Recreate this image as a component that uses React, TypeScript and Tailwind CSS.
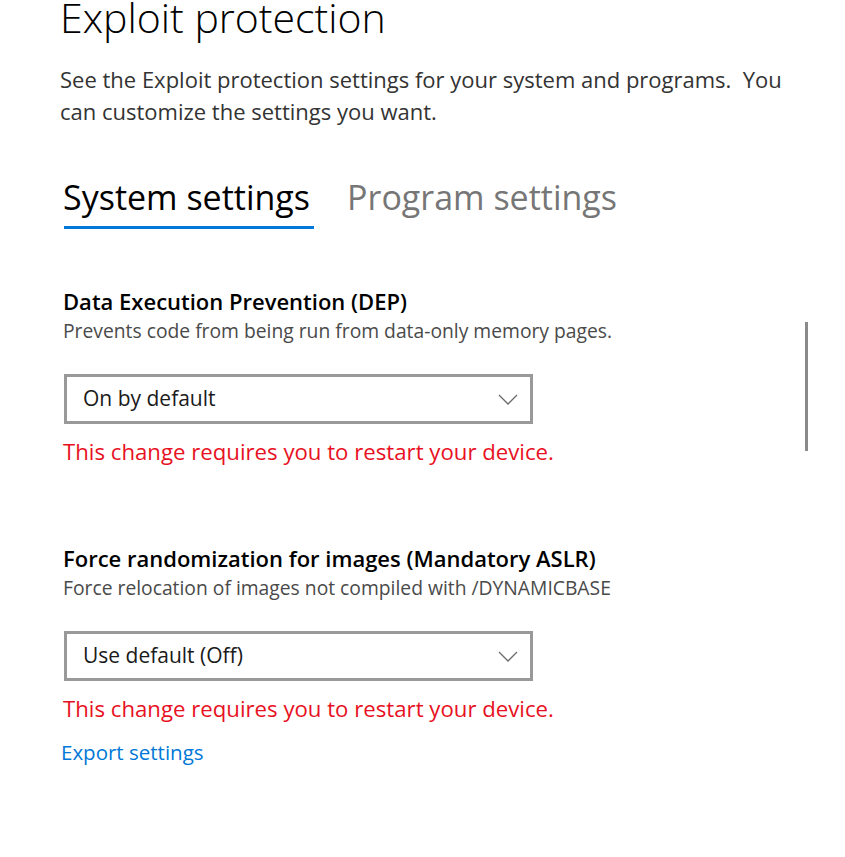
type Setting = {
  title: string;
  description: string;
  value: string;
};

const SETTINGS: Setting[] = [
  {
    title: 'Data Execution Prevention (DEP)',
    description: 'Prevents code from being run from data-only memory pages.',
    value: 'On by default',
  },
  {
    title: 'Force randomization for images (Mandatory ASLR)',
    description: 'Force relocation of images not compiled with /DYNAMICBASE',
    value: 'Use default (Off)',
  },
];

function Chevron() {
  return (
    <svg width="20" height="11" viewBox="0 0 20 11" fill="none" className="shrink-0">
      <polyline points="1,1 10,10 19,1" stroke="#6b6b6b" strokeWidth="1.3" />
    </svg>
  );
}

function SettingBlock({ s, first }: { s: Setting; first: boolean }) {
  return (
    <section className={first ? 'mt-[58px]' : 'mt-[77px]'}>
      <h3 className="pl-[3px] text-[22px] leading-[28px] font-semibold text-black">{s.title}</h3>
      <p className="mt-[4px] pl-[3px] text-[19.3px] leading-[24px] text-[#4a4a4a]">{s.description}</p>
      <button
        type="button"
        className="mt-[31px] ml-[4px] flex h-[50px] w-[469px] items-center justify-between border-[3px] border-[#999999] bg-white pr-[12px] pl-[16px] text-left"
      >
        <span className="text-[21px] text-[#1a1a1a]">{s.value}</span>
        <Chevron />
      </button>
      <p className="mt-[13px] pl-[3px] text-[22.2px] leading-[30px] text-[#e81123]">
        This change requires you to restart your device.
      </p>
    </section>
  );
}

export default function App() {
  return (
    <div
      className="relative h-[857px] w-[845px] overflow-hidden bg-white pl-[60px]"
      style={{ fontFamily: '"Segoe UI", "Open Sans", "Noto Sans", sans-serif' }}
    >
      <h1 className="-mt-[7px] text-[41px] leading-[48px] font-light text-black">Exploit protection</h1>
      <p className="mt-[22px] text-[22px] leading-[32px] text-[#333333]">
        See the Exploit protection settings for your system and programs.&nbsp; You
        <br />
        can customize the settings you want.
      </p>

      <div className="mt-[50px] flex items-start gap-[33px] pl-[3px]">
        <button type="button" className="flex flex-col items-stretch">
          <span className="pr-[4px] text-[34px] leading-[40px] text-black">System settings</span>
          <span className="mt-[9px] ml-[1px] h-[3px] bg-[#0078d7]" />
        </button>
        <button type="button" className="text-[34px] leading-[40px] text-[#767676]">
          Program settings
        </button>
      </div>

      {SETTINGS.map((s, i) => (
        <SettingBlock key={s.title} s={s} first={i === 0} />
      ))}

      <a href="#" className="mt-[14px] block pl-[1px] text-[20.5px] leading-[28px] text-[#0078d7]">
        Export settings
      </a>

      <div className="absolute top-[322px] left-[805px] h-[129px] w-[3px] bg-[#8a8a8a]" />
    </div>
  );
}
